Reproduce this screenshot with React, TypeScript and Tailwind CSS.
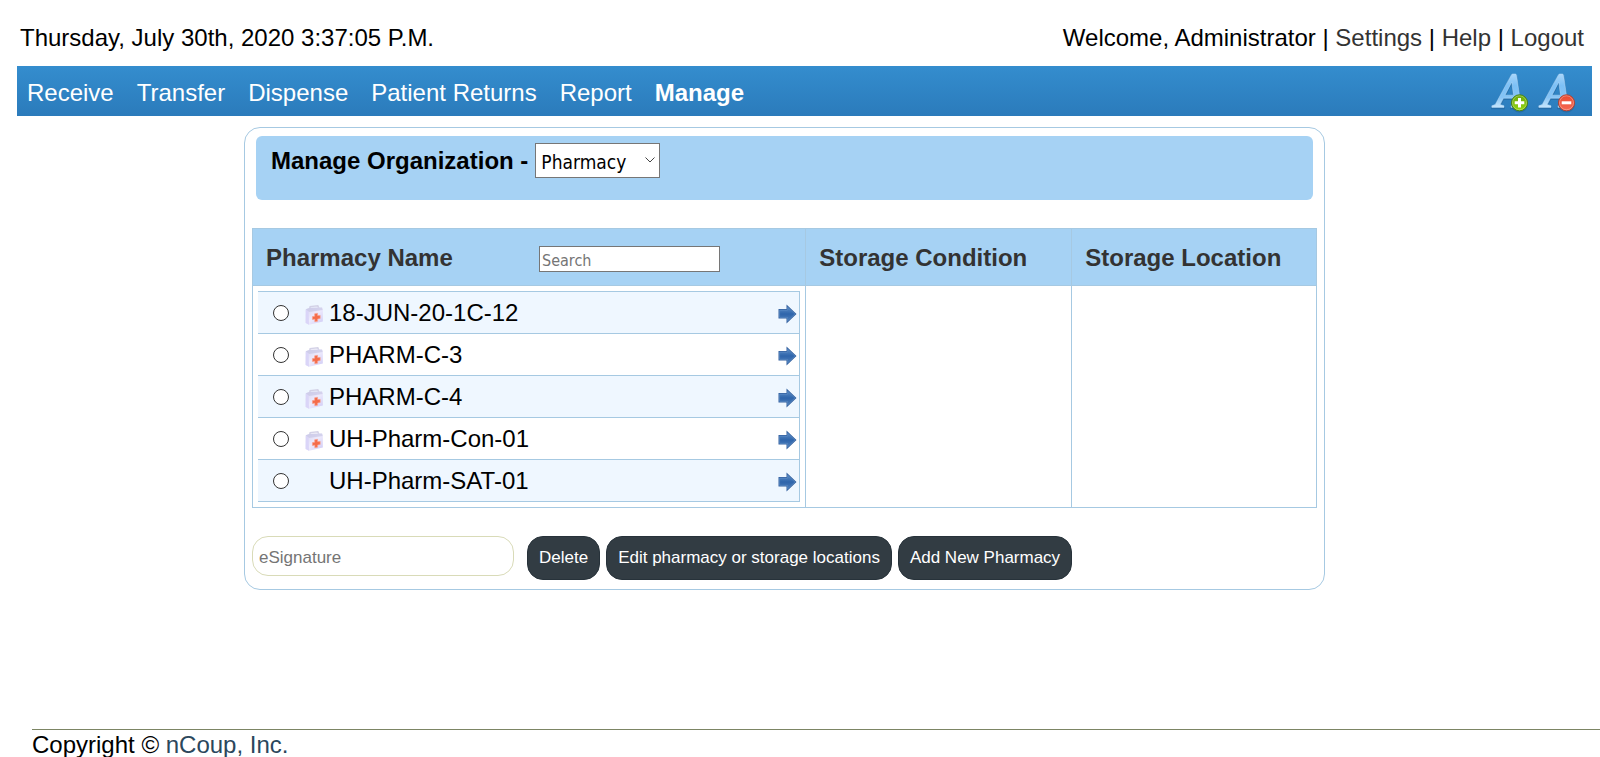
import React from "react";

const navItems = ["Receive", "Transfer", "Dispense", "Patient Returns", "Report"];

const pharmacies = [
  { name: "18-JUN-20-1C-12", kit: true },
  { name: "PHARM-C-3", kit: true },
  { name: "PHARM-C-4", kit: true },
  { name: "UH-Pharm-Con-01", kit: true },
  { name: "UH-Pharm-SAT-01", kit: false },
];

function FontSizeIcon({ kind }: { kind: "plus" | "minus" }) {
  const plus = kind === "plus";
  const id = `glyph-${kind}`;
  const glyph =
    "M.8 34.400V32.800L4.200 31.600 20.200 2.200 21.200 1H24.800L25.600 2.400 29.600 30 32 32.600V34.400H20V32.800L23.600 31.600 22.800 25.200H12.400L9.200 31.600 13 32.800V34.400zM14 22.200H22.400L20.800 9z";
  return (
    <svg width="38" height="40" viewBox="0 0 38 40" aria-hidden="true">
      <defs>
        <linearGradient id={id} x1="0" y1="0" x2="0" y2="1">
          <stop offset="0" stopColor="#a9d6fa" />
          <stop offset="0.350" stopColor="#7cc0f6" />
          <stop offset="0.700" stopColor="#86c4f5" />
          <stop offset="1" stopColor="#c8e6fc" />
        </linearGradient>
        <linearGradient id={`${id}-badge`} x1="0" y1="0" x2="0" y2="1">
          <stop offset="0" stopColor={plus ? "#6aa80a" : "#ea4a30"} />
          <stop offset="1" stopColor={plus ? "#92d612" : "#f56a54"} />
        </linearGradient>
      </defs>
      <path d={glyph} fill="#1c5a92" fillRule="evenodd" stroke="#1c5a92" strokeWidth="1.500" opacity="0.450" transform="translate(0 1)" />
      <path d={glyph} fill={`url(#${id})`} fillRule="evenodd" stroke="#b5dbf8" strokeWidth="0.500" />
      <circle cx="28.500" cy="31" r="8.600" fill="#1d4f78" opacity="0.350" />
      <circle cx="28.500" cy="29.800" r="8" fill={`url(#${id}-badge)`} stroke={plus ? "#4c8410" : "#b8412f"} />
      <circle cx="28.500" cy="29.800" r="7" fill="none" stroke="#fff" strokeOpacity="0.300" />
      <path d={plus ? "M28.500 25v9.600M23.700 29.800h9.600" : "M23.700 29.800h9.600"} stroke="#fff" strokeWidth="3" />
    </svg>
  );
}

function KitIcon() {
  return (
    <svg width="18" height="20" viewBox="0 0 18 20" aria-hidden="true" className="block">
      <defs>
        <linearGradient id="kit-body" x1="0" y1="0" x2="1" y2="1">
          <stop offset="0" stopColor="#d6d4f0" />
          <stop offset="0.500" stopColor="#eeebfd" />
          <stop offset="1" stopColor="#cdc8f4" />
        </linearGradient>
      </defs>
      <path d="M4.600 4.500 5.200 1.600 12.800.8 14 3.800" fill="none" stroke="#d3d1e6" strokeWidth="1.500" />
      <path d="M.8 4.200 5 2.800 17 2.600 17.800 4V16.600L4 19.800.6 18z" fill="url(#kit-body)" />
      <path d="M.8 4.200 5 2.800 17 2.600 17.600 5 4 7z" fill="#c9c7e6" opacity="0.700" />
      <path d="M.8 4.600 3.600 6.800 4 19.700.6 17.900z" fill="#dad5f8" />
      <path d="M9.600 8.800 12.600 8.200v2.400l2.600-.2v3l-2.600.6v2.200l-2.800.5v-2.500l-2.400.3v-2.900l2.300-.4z" fill="#f56c4a" stroke="#f9a391" strokeWidth="0.600" />
    </svg>
  );
}

function ArrowIcon() {
  return (
    <svg width="19" height="20" viewBox="0 0 19 20" aria-hidden="true" className="block">
      <defs>
        <linearGradient id="arrow-fill" x1="0" y1="0" x2="0" y2="1">
          <stop offset="0" stopColor="#5c8cc6" />
          <stop offset="0.500" stopColor="#2f65ab" />
          <stop offset="1" stopColor="#4c7dba" />
        </linearGradient>
      </defs>
      <path d="M.5 5H8.500V.5L18.500 10 8.500 19.500V14.500H.5z" fill="#34619f" />
      <path d="M1.600 6.100H9.600V3L16.900 10 9.600 17V13.400H1.600z" fill="url(#arrow-fill)" stroke="#6090c8" strokeWidth="0.600" />
    </svg>
  );
}

const buttonClass =
  "h-11 rounded-2xl border border-[#27323a] bg-[#323c43] px-[11px] text-[17px] text-white whitespace-nowrap";

export default function App() {
  return (
    <div className="bg-white font-['Liberation_Sans',Arial,sans-serif] text-2xl leading-7 text-black">
      <div className="flex justify-between pt-6 pr-4 pl-5">
        <p>Thursday, July 30th, 2020 3:37:05 P.M.</p>
        <p>
          Welcome, Administrator | <a href="#settings" className="text-[#333]">Settings</a> |{" "}
          <a href="#help" className="text-[#333]">Help</a> |{" "}
          <a href="#logout" className="text-[#333]">Logout</a>
        </p>
      </div>

      <nav className="mt-[14px] mr-2 ml-[17px] flex h-[50px] items-center justify-between bg-linear-to-b from-[#348dce] to-[#2b7bbb] pr-4 pl-[10px] text-white">
        <div className="flex gap-[23px] pt-1">
          {navItems.map((item) => (
            <a key={item} href="#menu">{item}</a>
          ))}
          <a href="#manage" className="font-bold">Manage</a>
        </div>
        <div className="flex gap-[9px] pt-1">
          <button type="button" aria-label="Increase text size"><FontSizeIcon kind="plus" /></button>
          <button type="button" aria-label="Decrease text size"><FontSizeIcon kind="minus" /></button>
        </div>
      </nav>

      <div className="pr-[31px]">
        <main className="mx-auto mt-[11px] max-w-[1081px] rounded-2xl border border-[#a6c9e2] px-[7px] pt-2 pb-[9px]">
          <div className="mx-1 flex h-16 items-start rounded-md bg-[#a6d2f4] pt-[7px] pl-[15px]">
            <label htmlFor="organization" className="pt-1 font-bold">Manage Organization -</label>
            <div className="relative ml-[7px]">
              <select
                id="organization"
                className="block h-[35px] w-[125px] appearance-none border border-[#767676] bg-white pt-[2px] pl-[5px] font-['DejaVu_Sans_Condensed','Noto_Sans',sans-serif] text-[19px] leading-7"
              >
                <option>Pharmacy</option>
              </select>
              <svg width="10" height="6" viewBox="0 0 10 6" aria-hidden="true" className="pointer-events-none absolute top-[14px] right-[5px]">
                <path d="M.5.500 5 5 9.500.500" fill="none" stroke="#444" />
              </svg>
            </div>
          </div>

          <table className="mt-7 w-full border-collapse border border-[#a6c9e2]">
            <thead>
              <tr className="h-[57px] bg-[#a6d2f4] text-left text-[#333]">
                <th className="w-[52%] border border-[#a6c9e2] pt-[2px] pl-[13px]">
                  <div className="flex items-center">
                    <span className="w-[273px]">Pharmacy Name</span>
                    <input
                      type="text"
                      aria-label="Search"
                      placeholder="Search"
                      className="mt-[2px] h-[26px] w-[181px] border border-[#767676] bg-white px-[2px] pt-[2px] font-['DejaVu_Sans_Condensed','Noto_Sans',sans-serif] text-base font-normal placeholder:text-[#757575]"
                    />
                  </div>
                </th>
                <th className="w-[25%] border border-[#a6c9e2] pt-[2px] pl-[13px]">Storage Condition</th>
                <th className="border border-[#a6c9e2] pt-[2px] pl-[13px]">Storage Location</th>
              </tr>
            </thead>
            <tbody>
              <tr>
                <td className="border border-[#a6c9e2] p-[5px]">
                  <ul className="border-t border-r border-[#a6c9e2]">
                    {pharmacies.map((pharmacy, index) => (
                      <li key={pharmacy.name} className="flex h-[42px] items-center border-b border-[#a6c9e2] pr-[2px] pl-[15px] odd:bg-[#eff7ff]">
                        <input
                          type="radio"
                          name="pharmacy"
                          id={`pharmacy-${index}`}
                          className="size-4 appearance-none rounded-full border border-[#333] bg-white checked:border-4"
                        />
                        <label htmlFor={`pharmacy-${index}`} className="ml-4 flex grow items-center gap-[6px]">
                          <span className="w-[18px] pt-1">{pharmacy.kit && <KitIcon />}</span>
                          {pharmacy.name}
                        </label>
                        <button type="button" aria-label={`Open ${pharmacy.name}`} className="pt-[3px]"><ArrowIcon /></button>
                      </li>
                    ))}
                  </ul>
                </td>
                <td className="border border-[#a6c9e2]" />
                <td className="border border-[#a6c9e2]" />
              </tr>
            </tbody>
          </table>

          <form className="mt-7 flex items-start gap-[6px]">
            <input
              type="password"
              aria-label="eSignature"
              placeholder="eSignature"
              className="mr-[7px] h-10 w-[262px] rounded-2xl border border-[#d9dbb8] px-[6px] pt-[3px] text-[17px] placeholder:text-[#757575]"
            />
            <button type="button" className={buttonClass}>Delete</button>
            <button type="button" className={buttonClass}>Edit pharmacy or storage locations</button>
            <button type="button" className={buttonClass}>Add New Pharmacy</button>
          </form>
        </main>
      </div>

      <footer className="mt-[139px] ml-8 border-t border-[#7c8564] pt-[3px] leading-6">
        Copyright © <a href="#company" className="text-[#2b475c]">nCoup, Inc.</a>
      </footer>
    </div>
  );
}
